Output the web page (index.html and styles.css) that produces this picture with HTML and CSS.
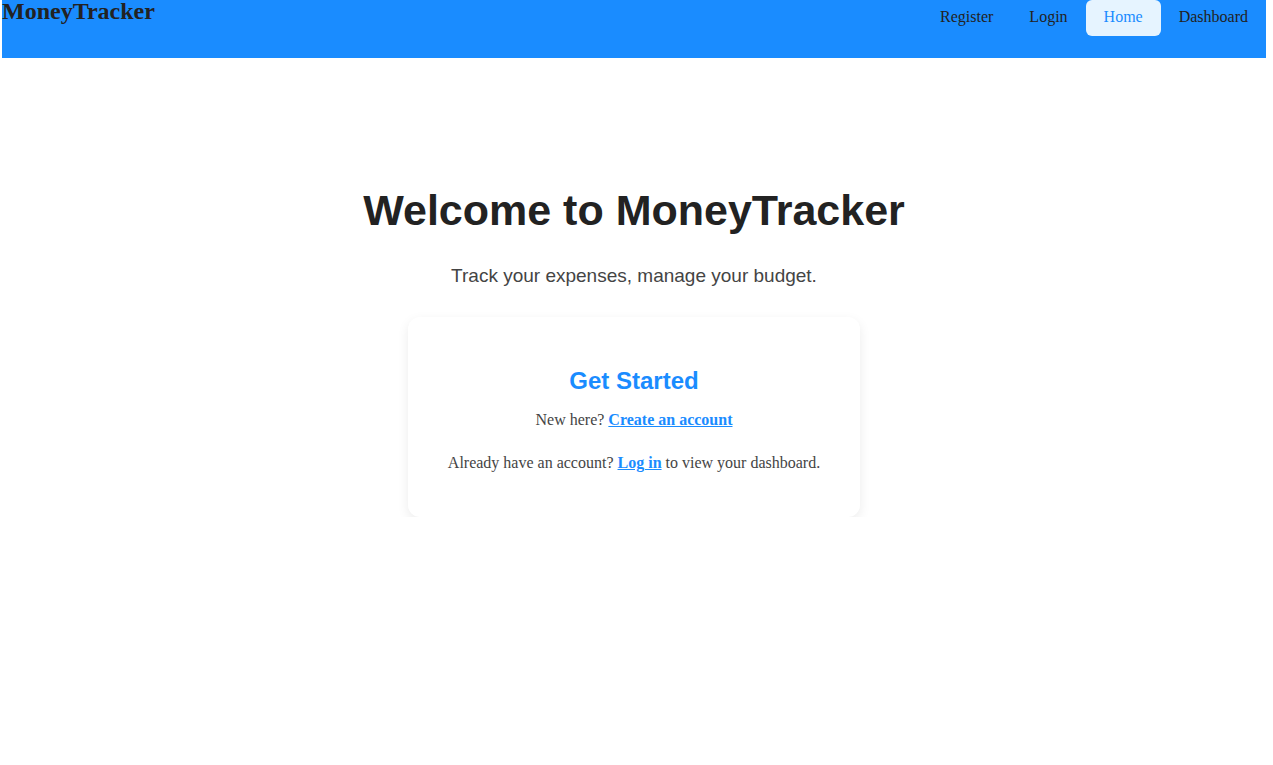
FILE: index.html
```html
<!DOCTYPE html>
<html lang="en">
<head>
<meta charset="utf-8">
<title>MoneyTracker</title>
<link rel="stylesheet" href="styles.css">
</head>
<body>
<div class="page">
  <header class="topbar">
    <div class="logo">MoneyTracker</div>
    <nav class="nav">
      <a class="nav-item" href="#">Register</a>
      <a class="nav-item" href="#">Login</a>
      <a class="nav-item active" href="#">Home</a>
      <a class="nav-item" href="#">Dashboard</a>
    </nav>
  </header>
  <main class="hero">
    <h1 class="title">Welcome to MoneyTracker</h1>
    <p class="subtitle">Track your expenses, manage your budget.</p>
    <section class="card">
      <h2 class="card-title">Get Started</h2>
      <p class="card-text">New here? <a class="link" href="#">Create an account</a></p>
      <p class="card-text">Already have an account? <a class="link" href="#">Log in</a> to view your dashboard.</p>
    </section>
  </main>
</div>
</body>
</html>
```

FILE: styles.css
```css
html, body {
  margin: 0;
  padding: 0;
  background: #ffffff;
}

.page {
  margin: 0 7px 0 2px;
  font-family: "Liberation Serif", "Times New Roman", serif;
}

.topbar {
  height: 58px;
  background: #1a8cff;
  display: flex;
  justify-content: space-between;
  align-items: flex-start;
}

.logo {
  font-family: "Liberation Serif", "Times New Roman", serif;
  font-weight: bold;
  font-size: 24px;
  line-height: 22px;
  color: #222222;
}

.nav {
  display: flex;
}

.nav-item {
  display: block;
  padding: 8px 18px 10px;
  line-height: 18px;
  font-size: 16px;
  color: #222222;
  text-decoration: none;
  border-radius: 6px;
}

.nav-item.active {
  background: #e6f4ff;
  color: #1a8cff;
}

.hero {
  padding-top: 128px;
  display: flex;
  flex-direction: column;
  align-items: center;
  text-align: center;
}

.title {
  margin: 0 0 30px;
  font-family: "Liberation Sans", Arial, sans-serif;
  font-weight: bold;
  font-size: 43px;
  color: #222222;
}

.subtitle {
  margin: 0 0 30px;
  font-family: "Liberation Sans", Arial, sans-serif;
  font-size: 19px;
  color: #444444;
}

.card {
  box-sizing: border-box;
  width: 452px;
  height: 200px;
  padding: 50px 32px 0;
  background: #ffffff;
  border-radius: 12px;
  box-shadow: 0 4px 12px rgba(0, 0, 0, 0.08);
}

.card-title {
  margin: 0 0 11px;
  font-family: "Liberation Sans", Arial, sans-serif;
  font-weight: bold;
  font-size: 24px;
  color: #1a8cff;
}

.card-text {
  margin: 0 0 16px;
  font-size: 16px;
  line-height: 1.7;
  color: #444444;
}

.link {
  color: #1a8cff;
  font-weight: bold;
  text-decoration: underline;
}
```
